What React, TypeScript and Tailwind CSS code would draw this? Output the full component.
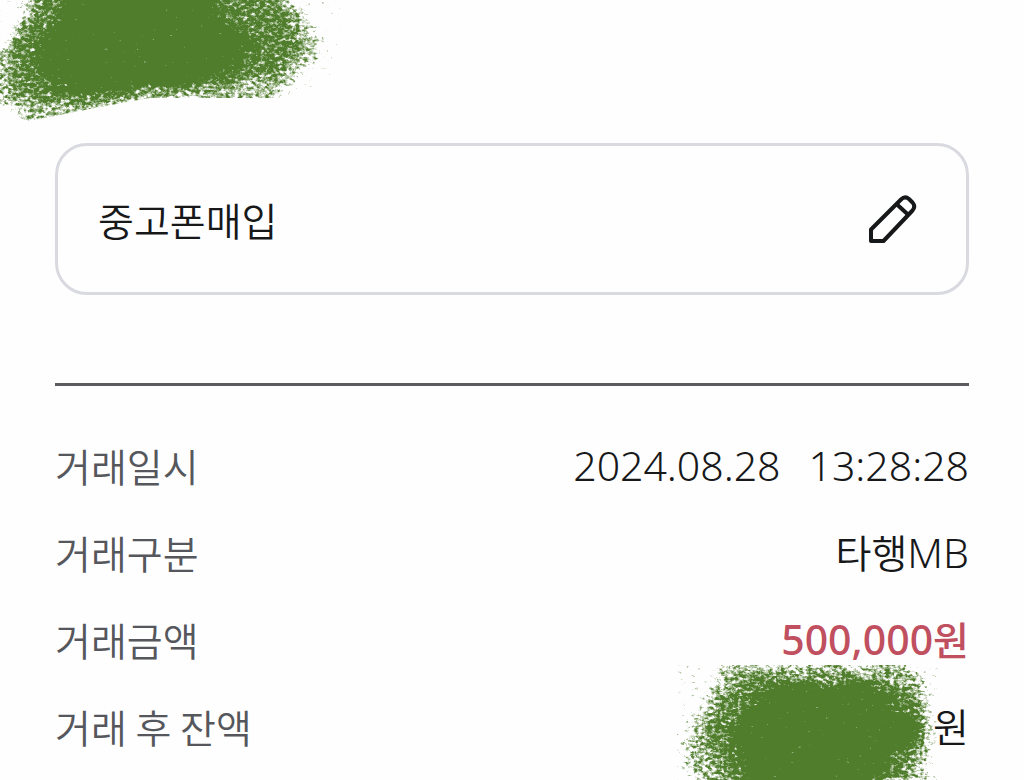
import { useId, useState, type ReactNode } from 'react'

const rows = [
  {
    label: '거래일시',
    value: (
      <span className="flex gap-7">
        <span>2024.08.28</span>
        <span>13:28:28</span>
      </span>
    ),
  },
  {
    label: '거래구분',
    value: (
      <>
        <Hangul>타행</Hangul>MB
      </>
    ),
  },
  {
    label: '거래금액',
    value: (
      <span className="font-medium text-[#c04f60]">
        500,000<span className="text-[39px]">원</span>
      </span>
    ),
  },
  { label: '거래 후 잔액', value: <Hangul>원</Hangul>, hidden: true },
]

function Hangul({ children }: { children: ReactNode }) {
  return <span className="font-['Noto_Sans_CJK_KR',sans-serif] text-[39px] leading-none font-[350]">{children}</span>
}

function PencilIcon() {
  return (
    <svg
      viewBox="0 0 50 50"
      className="size-[50px]"
      fill="none"
      stroke="currentColor"
      strokeWidth="4"
      strokeLinejoin="round"
      aria-hidden="true"
    >
      <path d="M3 47V35.500L33 5.500Q37 1.500 41 5L44.500 8.500Q48 12.500 44.500 16.500L15.500 47Z" />
      <path d="M28.500 10L40.500 21" />
    </svg>
  )
}

type MarkerProps = { className: string; viewBox: string; seed: number; children: ReactNode }

// Grainy marker stroke: opacity of the drawn shapes sets how dense the grain is
function Marker({ className, viewBox, seed, children }: MarkerProps) {
  const id = useId()
  return (
    <svg className={className} viewBox={viewBox} aria-hidden="true">
      <defs>
        <filter id={id} x="-10%" y="-20%" width="120%" height="140%" colorInterpolationFilters="sRGB">
          <feTurbulence type="fractalNoise" baseFrequency="0.03 0.24" numOctaves="3" seed={seed} result="wave" />
          <feDisplacementMap in="SourceGraphic" in2="wave" scale="36" xChannelSelector="R" yChannelSelector="A" result="rough" />
          <feGaussianBlur in="rough" stdDeviation="3 2" result="soft" />
          <feTurbulence type="fractalNoise" baseFrequency="0.23 0.31" numOctaves="5" seed={seed + 4} />
          <feColorMatrix values="0 0 0 0 0  0 0 0 0 0  0 0 0 0 0  0.8 0.8 0 0 -0.3" result="grain" />
          <feComposite in="soft" in2="grain" operator="arithmetic" k2="1.25" k3="1.3" k4="-0.92" />
          <feColorMatrix values="0 0 0 0 0.31  0 0 0 0 0.49  0 0 0 0 0.17  0 0 0 2 -0.1" />
        </filter>
      </defs>
      <g filter={`url(#${id})`}>{children}</g>
    </svg>
  )
}

export default function App() {
  const [memo, setMemo] = useState('중고폰매입')

  return (
    <main className="min-h-screen overflow-hidden bg-[#fefefe] px-[55px] pb-2 font-['Noto_Sans','Noto_Sans_CJK_KR',sans-serif] text-[#17181a]">
      <header className="relative h-[143px]">
        <div className="absolute top-0 -left-[55px] [clip-path:polygon(0_0,100%_0,100%_60%,280px_98px,150px_98px,100px_107px,24px_122px,0_112px)]">
          <Marker className="h-[130px] w-[340px]" viewBox="0 0 340 130" seed={3}>
            <path opacity="0.42" d="M36 -20H280L306 16L320 52L294 80L278 104H150L24 126L12 110L-8 102V58L8 44L24 18Z" />
            <path opacity="0.4" d="M40 -20H262L290 16L302 48L276 76L240 86L150 94L60 104L14 98L12 46L32 16Z" />
            <path d="M74 -20H205L222 22L250 40L240 62L205 78L150 86L75 92L42 78L38 46L62 16Z" />
          </Marker>
        </div>
      </header>

      <section className="flex h-[152px] items-center rounded-[32px] border-3 border-[#d9dae0] pr-[48px] pl-[40px]">
        <input
          aria-label="메모"
          value={memo}
          onChange={(e) => setMemo(e.target.value)}
          className="min-w-0 flex-1 bg-transparent font-['Noto_Sans_CJK_KR',sans-serif] text-[39px] font-[350] outline-none"
        />
        <button type="button" aria-label="메모 수정">
          <PencilIcon />
        </button>
      </section>

      <hr className="mt-[88px] mb-[36px] border-t-3 border-[#5b5c60]" />

      <dl>
        {rows.map((row) => (
          <div key={row.label} className="relative flex h-[87px] items-center justify-between">
            <dt className="font-['Noto_Sans_CJK_KR',sans-serif] text-[39px] font-[350] text-[#55575c]">{row.label}</dt>
            <dd className="text-[41px] font-light">{row.value}</dd>
            {row.hidden && (
              <div className="absolute -top-[18px] right-[30px] overflow-hidden">
                <Marker className="h-[120px] w-[262px]" viewBox="0 0 262 120" seed={11}>
                  <path opacity="0.42" d="M46 -3H222L246 10L250 34L258 60L250 105L232 140H30L6 90L14 64L28 38Z" />
                  <path opacity="0.4" d="M66 12H216L238 30L250 55L242 90L226 110L190 140H60L34 92L28 66L48 32Z" />
                  <path d="M92 20H196L222 42L244 58L234 78L210 96L176 140H80L62 92L54 66L70 42Z" />
                </Marker>
              </div>
            )}
          </div>
        ))}
      </dl>
    </main>
  )
}
